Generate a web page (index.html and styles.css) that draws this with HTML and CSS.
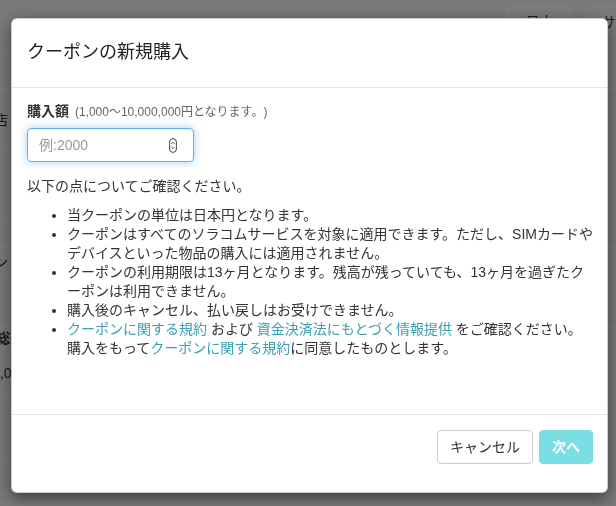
FILE: index.html
```html
<!DOCTYPE html>
<html lang="ja">
<head>
<meta charset="utf-8">
<title>クーポンの新規購入</title>
<link rel="stylesheet" href="styles.css">
</head>
<body>
<div class="page">
  <header class="topbar">
    <button class="nav-btn">日本</button>
    <button class="nav-btn nav-btn-wide">サポート</button>
  </header>
  <div class="row row-a"></div>
  <div class="row row-b"><span class="ghost ghost-shop">代理店</span></div>
  <div class="row row-c"></div>
  <div class="row row-d"></div>
  <div class="row row-e"><span class="ghost ghost-coupon">クーポン</span></div>
  <div class="row row-f"></div>
  <div class="row row-g"><span class="ghost ghost-total">総額</span></div>
  <div class="row row-h"><span class="ghost ghost-num">1,000</span></div>
  <div class="row row-i"></div>
</div>

<div class="backdrop"></div>

<div class="modal" role="dialog">
  <div class="modal-header">
    <h4 class="modal-title">クーポンの新規購入</h4>
  </div>
  <div class="modal-body">
    <label class="field-label">購入額 <span class="hint">(1,000〜10,000,000円となります。)</span></label>
    <div class="input-wrap">
      <input class="amount" type="text" placeholder="例:2000">
      <svg class="spin" width="8" height="15" viewBox="0 0 8 15" aria-hidden="true">
        <rect x="0.6" y="0.6" width="6.8" height="13.8" rx="3.4" fill="none" stroke="#444" stroke-width="1"/>
        <polyline points="2.3,6 4,4.3 5.7,6" fill="none" stroke="#444" stroke-width="0.9"/>
        <polyline points="2.3,9 4,10.7 5.7,9" fill="none" stroke="#444" stroke-width="0.9"/>
      </svg>
    </div>
    <p class="intro">以下の点についてご確認ください。</p>
    <ul class="notes">
      <li>当クーポンの単位は日本円となります。</li>
      <li>クーポンはすべてのソラコムサービスを対象に適用できます。ただし、SIMカードやデバイスといった物品の購入には適用されません。</li>
      <li>クーポンの利用期限は13ヶ月となります。残高が残っていても、13ヶ月を過ぎたク<br>ーポンは利用できません。</li>
      <li>購入後のキャンセル、払い戻しはお受けできません。</li>
      <li><a href="#" class="link">クーポンに関する規約</a> および <a href="#" class="link">資金決済法にもとづく情報提供</a> をご確認ください。<br>購入をもって<a href="#" class="link">クーポンに関する規約</a>に同意したものとします。</li>
    </ul>
  </div>
  <div class="modal-footer">
    <button class="btn btn-default">キャンセル</button>
    <button class="btn btn-primary" disabled>次へ</button>
  </div>
</div>
</body>
</html>
```

FILE: styles.css
```css
* {
  box-sizing: border-box;
}

html, body {
  margin: 0;
  height: 100%;
}

body {
  font-family: "Liberation Sans", "Noto Sans CJK JP", sans-serif;
  font-size: 14px;
  color: #333;
  background: #f2f2f2;
  overflow: hidden;
  text-spacing-trim: space-all;
}

/* background page */
.page {
  height: 100%;
  overflow: hidden;
}

.topbar {
  display: flex;
  gap: 13px;
  height: 50px;
  padding: 5px 0 0 507px;
  border-bottom: 1px solid #fff;
  overflow: hidden;
}

.nav-btn {
  flex-shrink: 0;
  width: 65px;
  height: 31px;
  border: 1px solid #fff;
  border-radius: 4px;
  background: #f6f6f6;
  color: #333;
  font: inherit;
  font-size: 14px;
}

.nav-btn-wide {
  width: 90px;
}

.row {
  display: flex;
  align-items: center;
  border-bottom: 1px solid #fff;
  white-space: nowrap;
  overflow: hidden;
}

.row-a { height: 39px; }
.row-b { height: 62px; }
.row-c { height: 68px; }
.row-d { height: 29px; }
.row-e { height: 29px; }
.row-f { height: 51px; }
.row-g { height: 20px; }
.row-h { height: 51px; }
.row-i { height: 60px; }

.ghost {
  font-size: 14px;
  color: #333;
  line-height: 18px;
}

.ghost-shop { margin-left: -34px; }
.ghost-coupon { margin-left: -48px; }
.ghost-total { margin-left: -4px; font-weight: bold; }
.ghost-num { margin-left: -8px; }

.backdrop {
  position: fixed;
  inset: 0;
  background: rgba(0, 0, 0, 0.5);
}

/* modal */
.modal {
  position: fixed;
  left: 11px;
  top: 18px;
  width: 597px;
  background: #fff;
  border: 1px solid rgba(0, 0, 0, 0.2);
  border-radius: 6px;
  box-shadow: 0 5px 15px rgba(0, 0, 0, 0.5);
}

.modal-header {
  padding: 20px 15px 22px;
  border-bottom: 1px solid #e5e5e5;
}

.modal-title {
  margin: 0;
  font-size: 18px;
  line-height: 26px;
  font-weight: normal;
  color: #222;
}

.modal-body {
  padding: 14px 8px 56px 15px;
}

.field-label {
  display: block;
  margin-bottom: 6px;
  font-weight: bold;
  line-height: 19px;
  color: #333;
}

.hint {
  margin-left: 2px;
  font-size: 12px;
  font-weight: normal;
  color: #666;
}

.input-wrap {
  display: flex;
  align-items: center;
  width: 167px;
  height: 34px;
  padding: 0 16px 0 11px;
  border: 1px solid #66afe9;
  border-radius: 4px;
  box-shadow: inset 0 1px 1px rgba(0, 0, 0, 0.075), 0 0 8px rgba(102, 175, 233, 0.6);
  margin-bottom: 15px;
}

.amount {
  flex: 1;
  min-width: 0;
  border: none;
  outline: none;
  padding: 0;
  background: transparent;
  font: inherit;
  font-size: 14px;
  color: #555;
}

.amount::placeholder {
  color: #999;
}

.spin {
  flex-shrink: 0;
  display: block;
}

.intro {
  margin: 0 0 10px;
  line-height: 19px;
}

.notes {
  margin: 0;
  padding-left: 40px;
  line-height: 19px;
}

.link {
  color: #3a9fae;
  text-decoration: none;
}

.modal-footer {
  display: flex;
  justify-content: flex-end;
  gap: 6px;
  padding: 15px 14px 28px 15px;
  border-top: 1px solid #e5e5e5;
}

.btn {
  height: 34px;
  padding: 6px 12px;
  border: 1px solid transparent;
  border-radius: 4px;
  font: inherit;
  font-size: 14px;
  line-height: 20px;
}

.btn-default {
  background: #fff;
  border-color: #ccc;
  color: #333;
}

.btn-primary {
  background: #7bdee5;
  border-color: #7bdee5;
  color: #fff;
  font-weight: bold;
}
```
